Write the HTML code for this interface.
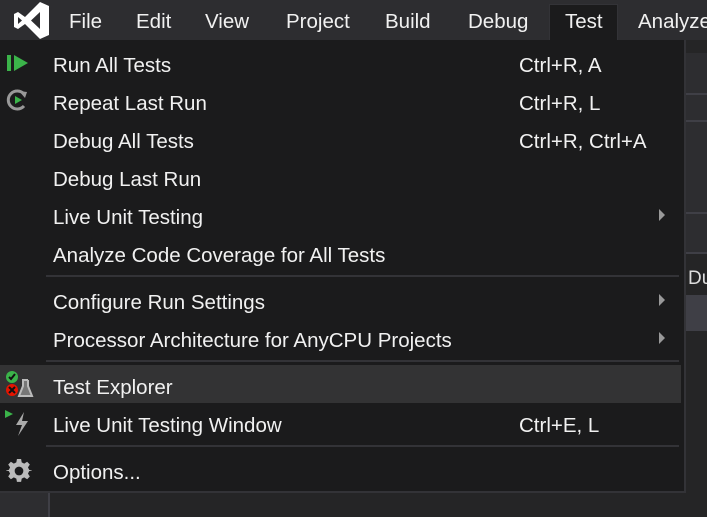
<!DOCTYPE html>
<html><head><style>
body{margin:0;width:707px;height:517px;background:#252526;overflow:hidden;position:relative;font-family:"Liberation Sans",sans-serif;color:#f1f1f1}
.bar{position:absolute;left:0;top:0;width:707px;height:40px;background:#2d2d30}
.mi{position:absolute;top:10px;font-size:20.5px;color:#f1f1f1}
.tab{position:absolute;left:549px;top:4px;width:69px;height:37px;background:#1b1b1c;border:1px solid #333337;border-bottom:none;box-sizing:border-box}
.menu{position:absolute;left:0;top:40px;width:686px;height:453px;background:#1b1b1c;border-right:2px solid #333337;border-bottom:2px solid #333337;box-sizing:border-box}
.it{position:absolute;left:53px;font-size:20.5px;line-height:38px;height:38px;white-space:nowrap;padding-top:2px}
.sc{position:absolute;left:519px;font-size:20.5px;line-height:38px;padding-top:2px}
.sep{position:absolute;left:46px;width:633px;height:2px;background:#333337}
.ar{position:absolute;left:659px;width:0;height:0;border-left:6px solid #999;border-top:6px solid transparent;border-bottom:6px solid transparent}
.hl{position:absolute;left:0;top:365px;width:681px;height:38px;background:#333334}
</style></head><body>
<div class="bar"></div>
<div style="position:absolute;left:684px;top:53px;width:23px;height:200px;background:#2d2d30"></div>
<div style="position:absolute;left:684px;top:93px;width:23px;height:2px;background:#3f3f46"></div>
<div style="position:absolute;left:684px;top:120px;width:23px;height:2px;background:#3f3f46"></div>
<div style="position:absolute;left:684px;top:212px;width:23px;height:2px;background:#3f3f46"></div>
<div style="position:absolute;left:684px;top:252px;width:23px;height:2px;background:#3f3f46"></div>
<div style="position:absolute;left:684px;top:295px;width:23px;height:36px;background:#3f3f46"></div>
<div style="position:absolute;left:688px;top:268px;font-size:19px;color:#ddd">Dur</div>
<div style="position:absolute;left:0;top:493px;width:48px;height:24px;background:#2d2d30;border-right:2px solid #3f3f46"></div>
<svg style="position:absolute;left:13px;top:2px" width="37" height="37" viewBox="0 0 37 37"><path d="M27 0 L36 4 L36 33 L27 37 L12 22 L5 27 L1 25 L1 12 L5 10 L12 15 Z M27 10 L18 18.5 L27 27 Z M5 15 L5 22 L9 18.5 Z" fill="#fff" fill-rule="evenodd"/></svg>
<div class="mi" style="left:69px">File</div>
<div class="mi" style="left:136px">Edit</div>
<div class="mi" style="left:205px">View</div>
<div class="mi" style="left:286px">Project</div>
<div class="mi" style="left:385px">Build</div>
<div class="mi" style="left:468px">Debug</div>
<div class="tab"></div>
<div class="mi" style="left:565px">Test</div>
<div class="mi" style="left:638px">Analyze</div>
<div class="menu"></div>
<div class="hl"></div>
<svg style="position:absolute;left:5px;top:52px" width="26" height="24"><rect x="2" y="3" width="4" height="16" fill="#3bb44a"/><path d="M9 3 L23 11 L9 19 Z" fill="#3bb44a"/></svg>
<svg style="position:absolute;left:4px;top:88px" width="26" height="26"><path d="M20 6 A9 9 0 1 0 20 18" stroke="#999" stroke-width="3" fill="none"/><path d="M15 3 L23 4 L21 10 Z" fill="#999"/><path d="M11 8 L18 12 L11 16 Z" fill="#3bb44a"/></svg>
<div class="it" style="top:45px">Run All Tests</div><div class="sc" style="top:45px">Ctrl+R, A</div>
<div class="it" style="top:83px">Repeat Last Run</div><div class="sc" style="top:83px">Ctrl+R, L</div>
<div class="it" style="top:121px">Debug All Tests</div><div class="sc" style="top:121px">Ctrl+R, Ctrl+A</div>
<div class="it" style="top:159px">Debug Last Run</div>
<div class="it" style="top:197px">Live Unit Testing</div><div class="ar" style="top:209px"></div>
<div class="it" style="top:235px">Analyze Code Coverage for All Tests</div>
<div class="sep" style="top:275px"></div>
<div class="it" style="top:282px">Configure Run Settings</div><div class="ar" style="top:294px"></div>
<div class="it" style="top:320px">Processor Architecture for AnyCPU Projects</div><div class="ar" style="top:332px"></div>
<div class="sep" style="top:360px"></div>
<svg style="position:absolute;left:4px;top:370px" width="30" height="30"><circle cx="8" cy="7" r="6" fill="#3bb44a"/><path d="M5 7 L7 9 L11 4" stroke="#111" stroke-width="2" fill="none"/><circle cx="8" cy="20" r="6" fill="#e51400"/><path d="M5 17 L11 23 M11 17 L5 23" stroke="#111" stroke-width="2"/><path d="M18 10 L24 10 M19 10 L19 16 L15 26 L28 26 L24 16 L24 10" stroke="#bbb" stroke-width="2" fill="#777"/></svg>
<div class="it" style="top:367px">Test Explorer</div>
<svg style="position:absolute;left:4px;top:408px" width="30" height="30"><path d="M1 2 L9 6 L1 10 Z" fill="#3bb44a"/><path d="M20 4 L12 17 L18 17 L14 28 L24 13 L18 13 Z" fill="#aaa"/></svg>
<div class="it" style="top:405px">Live Unit Testing Window</div><div class="sc" style="top:405px">Ctrl+E, L</div>
<div class="sep" style="top:445px"></div>
<svg style="position:absolute;left:6px;top:458px" width="26" height="26" viewBox="0 0 24 24"><path d="M10 1 H14 L14.6 4.2 L17 5.4 L19.8 3.6 L22.4 6.2 L20.6 9 L21.8 11.4 L25 12 V12 L21.8 12.6 L20.6 15 L22.4 17.8 L19.8 20.4 L17 18.6 L14.6 19.8 L14 23 H10 L9.4 19.8 L7 18.6 L4.2 20.4 L1.6 17.8 L3.4 15 L2.2 12.6 L-1 12 L2.2 11.4 L3.4 9 L1.6 6.2 L4.2 3.6 L7 5.4 L9.4 4.2 Z" fill="#bbb" transform="translate(0.5 0) scale(0.96)"/><circle cx="12" cy="12" r="4" fill="#1b1b1c"/></svg>
<div class="it" style="top:452px">Options...</div>
</body></html>
